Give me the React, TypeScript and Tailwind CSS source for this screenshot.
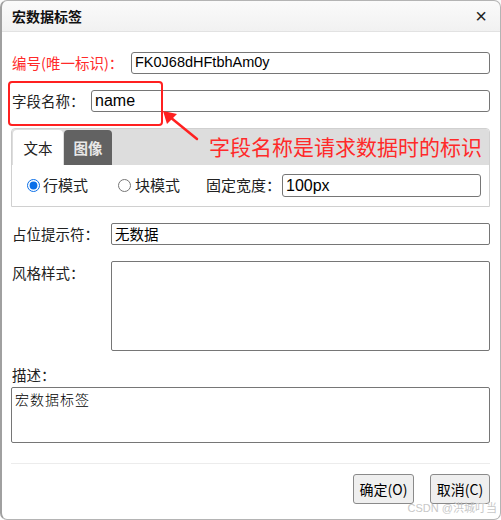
import React from "react";

const font = { fontFamily: '"Noto Sans CJK SC", "Liberation Sans", sans-serif' };
const latin = { fontFamily: '"Liberation Sans", "Noto Sans CJK SC", sans-serif' };

export default function App() {
  return (
    <div className="w-[501px] h-[520px] bg-white relative overflow-hidden" style={font}>
      <div className="absolute inset-0 border border-[#b4b4b4] border-l-2 border-l-[#a0a0a0] rounded-[7px] pointer-events-none z-10" />
      {/* title bar */}
      <div className="h-[32px] bg-gradient-to-b from-[#fbfbfb] to-[#f1f1f1] border-b border-[#e2e2e2] flex items-center justify-between pl-[12px] pr-[14px]">
        <span className="text-[14px] font-bold text-[#111] leading-none">宏数据标签</span>
        <span className="text-[20px] leading-none text-[#222]" style={latin}>×</span>
      </div>

      <div className="px-[11px] text-[14.5px] text-[#222]">
        {/* row 1 */}
        <div className="flex items-center mt-[20px] h-[22px]">
          <span className="w-[120px] pl-[1px] text-[#ff2a2a] whitespace-nowrap">编号(唯一标识)：</span>
          <div className="flex-1 h-[22px] border border-[#767676] rounded-[3px] flex items-center px-[3px] text-[14.5px] text-black" style={latin}>
            FK0J68dHFtbhAm0y
          </div>
        </div>
        {/* row 2 */}
        <div className="flex items-center mt-[16px] h-[22px]">
          <span className="w-[80px] pl-[1px] whitespace-nowrap">字段名称：</span>
          <div className="flex-1 h-[22px] border border-[#767676] rounded-[3px] flex items-center px-[3px] text-[16px] text-black" style={latin}>
            name
          </div>
        </div>

        {/* tab panel */}
        <div className="mt-[16px] h-[79px] border border-[#d0d0d0] rounded-t-[4px] flex flex-col">
          <div className="h-[36px] bg-[#dddddd] flex items-end pl-[1px] gap-[1px] rounded-t-[3px]">
            <div className="w-[50px] h-[35px] bg-white rounded-t-[4px] flex items-center justify-center text-[14.5px] text-[#222]">文本</div>
            <div className="w-[48px] h-[35px] bg-[#626262] rounded-t-[4px] flex items-center justify-center text-[14.5px] font-bold text-[#e8e8e8]">图像</div>
          </div>
          <div className="flex-1 flex items-center pl-[15px] text-[15px]">
            <label className="flex items-center gap-[3px] w-[91px]">
              <input type="radio" name="mode" defaultChecked className="w-[13px] h-[13px] m-0 accent-[#0b6fe8]" />
              <span>行模式</span>
            </label>
            <label className="flex items-center gap-[4px] w-[88px]">
              <input type="radio" name="mode" className="w-[13px] h-[13px] m-0" />
              <span>块模式</span>
            </label>
            <span className="w-[76px] whitespace-nowrap">固定宽度：</span>
            <div className="w-[199px] h-[23px] border border-[#767676] rounded-[3px] flex items-center px-[3px] text-[16px] text-black" style={latin}>
              100px
            </div>
          </div>
        </div>

        {/* placeholder */}
        <div className="flex items-center mt-[16px] h-[22px]">
          <span className="w-[100px] pl-[1px] whitespace-nowrap">占位提示符：</span>
          <div className="flex-1 h-[22px] border border-[#767676] rounded-[2px] flex items-center px-[3px] text-[14.5px] text-black">
            无数据
          </div>
        </div>

        {/* style */}
        <div className="flex mt-[16px]">
          <span className="w-[100px] pl-[1px] pt-[1px] whitespace-nowrap">风格样式：</span>
          <div className="flex-1 h-[90px] border border-[#767676] rounded-[2px]" />
        </div>

        {/* description */}
        <div className="mt-[15px] leading-[18px] pl-[1px]">描述：</div>
        <div className="mt-[3px] h-[56px] border border-[#767676] rounded-[2px] px-[3px] pt-[1px] text-[14px] text-black tracking-[1px]" style={{ fontFamily: '"Noto Sans CJK SC", serif', fontWeight: 300 }}>
          宏数据标签
        </div>

        {/* separator */}
        <div className="mt-[20px] border-t border-[#ececec]" />

        {/* buttons */}
        <div className="flex justify-end gap-[16px] mt-[10px]">
          <button className="w-[61px] h-[30px] bg-[#efefef] border border-[#8a8a8a] rounded-[3px] text-[14px] text-black">确定(O)</button>
          <button className="w-[60px] h-[30px] bg-[#efefef] border border-[#8a8a8a] rounded-[3px] text-[14px] text-black">取消(C)</button>
        </div>
      </div>

      {/* annotation: red box */}
      <div className="absolute left-[8px] top-[81px] w-[155px] h-[45px] border-2 border-[#ff2020] rounded-[4px]" />
      {/* annotation arrow */}
      <svg className="absolute left-0 top-0" width="501" height="520" style={{ pointerEvents: "none" }}>
        <line x1="197" y1="139" x2="170" y2="117" stroke="#ff2020" strokeWidth="2.5" strokeLinecap="round" />
        <polygon points="163,111 177,114 167,124" fill="#ff2020" />
      </svg>
      {/* annotation text */}
      <div className="absolute left-[209px] top-[132px] text-[21px] leading-[28px] text-[#ff2a2a] whitespace-nowrap">
        字段名称是请求数据时的标识
      </div>

      {/* watermark */}
      <div className="absolute right-[4px] bottom-[6px] text-[11px] leading-none text-[#c8c8c8]" style={latin}>
        CSDN @洪城叮当
      </div>
    </div>
  );
}
